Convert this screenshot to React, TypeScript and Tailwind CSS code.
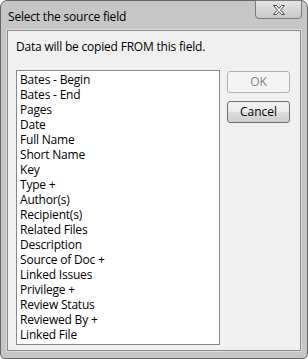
import React from 'react';

const fields = [
  'Bates - Begin',
  'Bates - End',
  'Pages',
  'Date',
  'Full Name',
  'Short Name',
  'Key',
  'Type +',
  'Author(s)',
  'Recipient(s)',
  'Related Files',
  'Description',
  'Source of Doc +',
  'Linked Issues',
  'Privilege +',
  'Review Status',
  'Reviewed By +',
  'Linked File',
];

const CloseGlyph = () => (
  <svg width="14" height="12" viewBox="0 0 14 12">
    <path
      d="M1.5 1.5h3l2.5 3 2.5-3h3l-4 4.5 4 4.5h-3l-2.5-3-2.5 3h-3l4-4.5z"
      fill="#ffffff"
      stroke="#4a4f57"
      strokeWidth="1"
      strokeLinejoin="round"
    />
  </svg>
);

export default function App() {
  return (
    <div className="w-[308px] h-[359px] bg-white font-['Open_Sans','Noto_Sans',sans-serif] text-[12px] text-black">
      <div className="w-full h-full rounded-t-[7px] rounded-b-[5px] border border-[#666666] bg-[#c6c6c6] flex flex-col">
        {/* title bar */}
        <div className="h-[29px] flex items-start pl-[7px] pr-[5px] shrink-0">
          <span className="mt-[9px] leading-[14px] tracking-[-0.2px]">Select the source field</span>
          <button className="ml-auto -mt-px w-[47px] h-[19px] rounded-b-[4px] border border-[#7b7b7b] bg-gradient-to-b from-[#e4e4e4] to-[#c9c9c9] flex items-center justify-center">
            <CloseGlyph />
          </button>
        </div>
        {/* client */}
        <div className="flex-1 mx-[6px] mb-[7px] border border-[#8a8a8a] bg-[#f0f0f0] flex flex-col shadow-[0_0_0_1px_#dcdcdc]">
          <p className="mt-[8px] ml-[8px] leading-[15px] tracking-[-0.2px]">Data will be copied FROM this field.</p>
          <div className="flex mt-[16px] ml-[8px]">
            <ul className="w-[204px] h-[275px] border border-[#828790] bg-white pt-[1px] pl-[3px]">
              {fields.map((f) => (
                <li key={f} className="h-[15px] leading-[15px] tracking-[-0.2px] whitespace-nowrap">
                  {f}
                </li>
              ))}
            </ul>
            <div className="ml-[7px] flex flex-col gap-[8px] pt-[1px]">
              <button
                disabled
                className="w-[63px] h-[22px] rounded-[3px] border border-[#adb2b5] bg-[#f4f4f4] text-[#838383] leading-[18px]"
              >
                OK
              </button>
              <button className="w-[63px] h-[22px] rounded-[3px] border border-[#707070] bg-[linear-gradient(#f2f2f2_0%,#ebebeb_50%,#dddddd_50%,#cfcfcf_100%)] leading-[18px]">
                Cancel
              </button>
            </div>
          </div>
        </div>
      </div>
    </div>
  );
}
